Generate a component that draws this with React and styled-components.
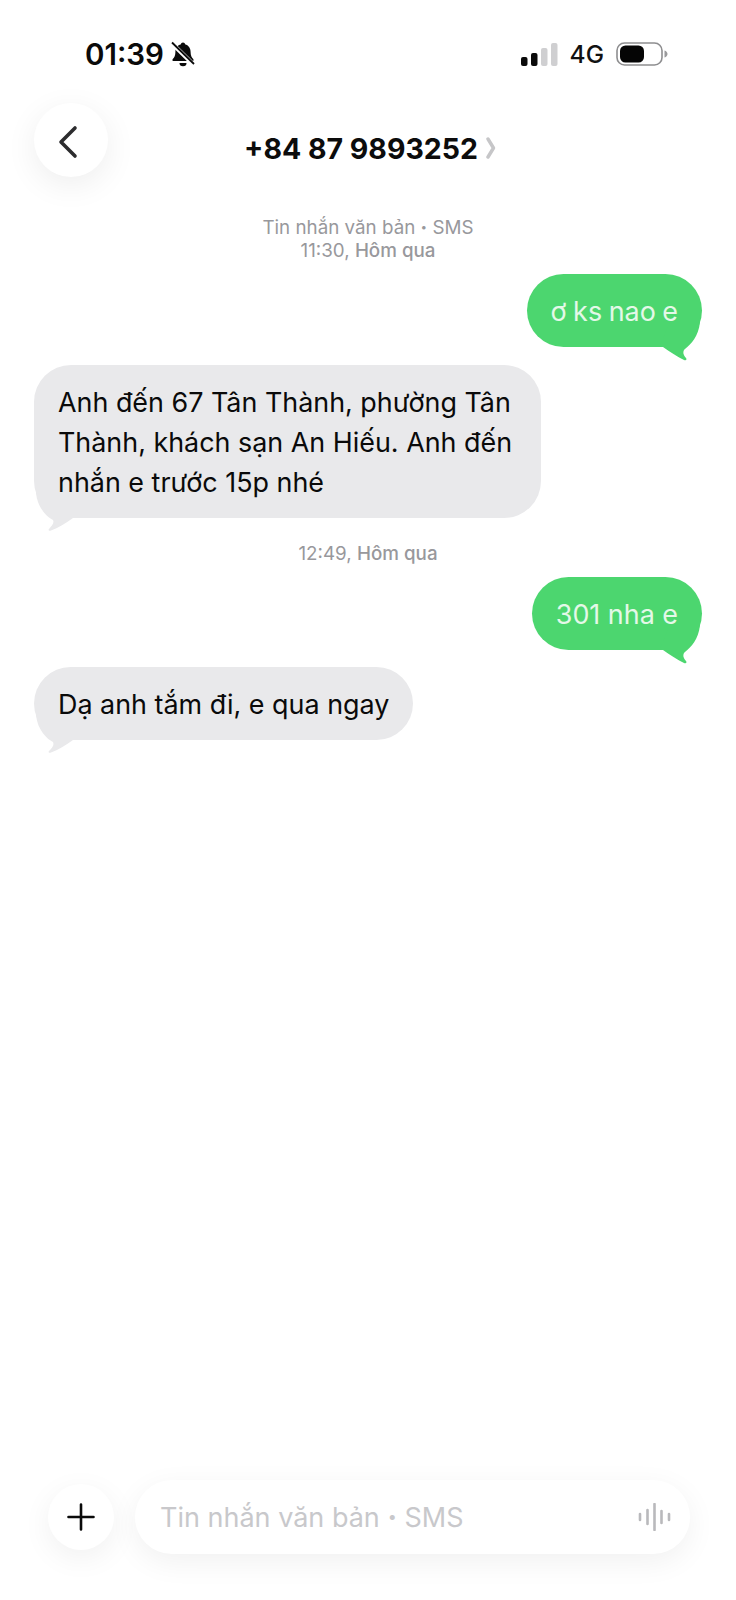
import React from "react";
import styled, { createGlobalStyle } from "styled-components";

const Global = createGlobalStyle`
  html, body { margin: 0; padding: 0; background: #fff; }
  body { font-family: Inter, "Liberation Sans", sans-serif; }
`;

const Page = styled.div`
  width: 736px;
  height: 1600px;
  display: flex;
  flex-direction: column;
  overflow: hidden;
  background: #fff;
`;

const StatusBar = styled.div`
  height: 103px;
  box-sizing: border-box;
  padding: 38px 68px 0 85px;
  display: flex;
  justify-content: space-between;
  align-items: flex-start;
`;
const StatusGroup = styled.div`
  display: flex;
  align-items: center;
  height: 32px;
  gap: ${(p) => p.$gap}px;
`;
const Clock = styled.span`
  font-size: 29.5px;
  font-weight: 600;
  color: #0a0a0a;
`;
const Network = styled.span`
  font-size: 24.5px;
  font-weight: 500;
  color: #111;
`;

const Header = styled.div`
  height: 74px;
  padding: 0 34px;
  display: grid;
  grid-template-columns: 1fr auto 1fr;
  align-items: center;
`;
const BackButton = styled.div`
  width: 74px;
  height: 74px;
  border-radius: 50%;
  background: #fff;
  box-shadow: 0 8px 32px rgba(0, 0, 0, 0.07);
  display: flex;
  align-items: center;
  justify-content: center;
  padding: 3px 6px 0 0;
  box-sizing: border-box;
`;
const TitleRow = styled.div`
  display: flex;
  align-items: center;
  gap: 8px;
  padding: 16px 0 0 4px;
`;
const Title = styled.span`
  font-size: 28.5px;
  font-weight: 700;
  color: #0c0c0c;
`;

const Thread = styled.div`
  flex: 1;
  padding: 0 34px;
  display: flex;
  flex-direction: column;
`;
const Meta = styled.div`
  text-align: center;
  font-size: 18.8px;
  line-height: 23px;
  color: #98989c;
  margin-top: ${(p) => p.$top}px;
  margin-bottom: ${(p) => p.$bottom}px;
`;
const MetaStrong = styled.span`
  font-weight: 500;
`;
const Dot = styled.span`
  font-weight: 800;
`;
const Bubble = styled.div`
  position: relative;
  align-self: ${(p) => (p.$out ? "flex-end" : "flex-start")};
  box-sizing: border-box;
  width: ${(p) => (p.$wide ? "507px" : "auto")};
  padding: 17px 24px 16px;
  border-radius: 37px;
  background: ${(p) => (p.$out ? "#4cd66f" : "#e9e9eb")};
  color: ${(p) => (p.$out ? "#e4f8e8" : "#0a0a0a")};
  font-size: 26.9px;
  line-height: 40px;
  word-spacing: ${(p) => (p.$tight ? "-1px" : "0")};
  margin-bottom: ${(p) => p.$bottom}px;
`;
const TailSvg = styled.svg`
  position: absolute;
  overflow: visible;
  top: calc(100% - 10px);
  ${(p) => (p.$out ? "right: 2px;" : "left: 8px;")}
`;

const Composer = styled.div`
  padding: 0 46px 46px 48px;
  display: flex;
  align-items: center;
  gap: 21px;
`;
const AddButton = styled.div`
  flex: none;
  width: 66px;
  height: 66px;
  border-radius: 50%;
  background: #fff;
  box-shadow: 0 8px 30px rgba(0, 0, 0, 0.06);
  display: flex;
  align-items: center;
  justify-content: center;
`;
const InputPill = styled.div`
  flex: 1;
  height: 74px;
  box-sizing: border-box;
  border-radius: 37px;
  background: #fff;
  box-shadow: 0 8px 30px rgba(0, 0, 0, 0.06);
  padding: 0 19px 0 25px;
  display: flex;
  align-items: center;
  justify-content: space-between;
`;
const Placeholder = styled.span`
  font-size: 27px;
  color: #c8c8cb;
`;

const Tail = ({ out }) =>
  out ? (
    <TailSvg $out width="40" height="26" viewBox="0 0 40 26">
      <path d="M0 8 L3 10 C10 15 18 20 24 23 C26.5 24 27 22 26 21 C23 18 22.5 14 25 12 C31 7 38.5 0 40 -15 L10 -15 Z" fill="#4cd66f" />
    </TailSvg>
  ) : (
    <TailSvg width="40" height="26" viewBox="0 0 40 26">
      <path d="M31 10 C24 15 16 20 9 22.5 C7 23.5 6 22 7 21 C10 18 12.5 15 11 12 C5 9 -4.5 0 -6 -15 L26 -15 Z" fill="#e9e9eb" />
    </TailSvg>
  );

const Bell = () => (
  <svg width="24" height="26" viewBox="0 0 24 26">
    <path d="M12 1.5c1.2 0 2 .8 2 1.8 3.6 1 5.6 4 5.6 7.6 0 3.4 1 5.4 2.6 7 .8.9.3 2.1-.9 2.1H2.7c-1.2 0-1.7-1.2-.9-2.1 1.6-1.6 2.6-3.6 2.6-7 0-3.6 2-6.6 5.6-7.6 0-1 .8-1.8 2-1.8z" fill="#0a0a0a" />
    <path d="M8.5 22h7a3.5 3.2 0 0 1-7 0z" fill="#0a0a0a" />
    <path d="M1 2.5 L23 24" stroke="#fff" strokeWidth="4.4" />
    <path d="M1 1.5 L23 23" stroke="#0a0a0a" strokeWidth="1.8" />
  </svg>
);

const Signal = () => (
  <svg width="37" height="23" viewBox="0 0 37 23">
    <rect x="0" y="14" width="6.5" height="9" rx="2" fill="#0a0a0a" />
    <rect x="10" y="10" width="6.5" height="13" rx="2" fill="#0a0a0a" />
    <rect x="20" y="5" width="6.5" height="18" rx="2" fill="#cfcfd1" />
    <rect x="30" y="0" width="6.5" height="23" rx="2" fill="#cfcfd1" />
  </svg>
);

const Battery = () => (
  <svg width="52" height="24" viewBox="0 0 52 24">
    <rect x="1" y="1" width="45" height="22" rx="7.5" fill="none" stroke="#8e8e90" strokeWidth="1.6" />
    <rect x="4" y="3.5" width="24" height="17" rx="5.5" fill="#050505" />
    <path d="M48.5 8.5c2 .6 3 2 3 3.5s-1 2.9-3 3.5z" fill="#9a9a9c" />
  </svg>
);

const Chevron = () => (
  <svg width="22" height="34" viewBox="0 0 22 34">
    <path d="M18 3 L4 17 L18 31" fill="none" stroke="#2c2c2e" strokeWidth="3.6" strokeLinecap="round" strokeLinejoin="round" />
  </svg>
);

const Disclosure = () => (
  <svg width="10" height="22" viewBox="0 0 10 22">
    <path d="M2 2 L7.5 11 L2 20" fill="none" stroke="#c6c6c8" strokeWidth="3.4" strokeLinecap="round" strokeLinejoin="round" />
  </svg>
);

const Plus = () => (
  <svg width="28" height="28" viewBox="0 0 28 28">
    <path d="M14 1.5 V26.5 M1.5 14 H26.5" stroke="#0a0a0a" strokeWidth="2.6" strokeLinecap="round" />
  </svg>
);

const Wave = () => (
  <svg width="33" height="28" viewBox="0 0 33 28">
    <path d="M2 11 V17 M9.5 7 V21 M16.5 1 V27 M23.5 8 V20 M31 11 V17" stroke="#b9b9bc" strokeWidth="2.6" strokeLinecap="round" />
  </svg>
);

export default function App() {
  return (
    <Page>
      <Global />
      <StatusBar>
        <StatusGroup $gap={7}>
          <Clock>01:39</Clock>
          <Bell />
        </StatusGroup>
        <StatusGroup $gap={12}>
          <Signal />
          <Network>4G</Network>
          <Battery />
        </StatusGroup>
      </StatusBar>
      <Header>
        <BackButton>
          <Chevron />
        </BackButton>
        <TitleRow>
          <Title>+84 87 9893252</Title>
          <Disclosure />
        </TitleRow>
        <div />
      </Header>
      <Thread>
        <Meta $top={39} $bottom={12}>
          Tin nhắn văn bản <Dot>·</Dot> SMS
          <br />
          11:30, <MetaStrong>Hôm qua</MetaStrong>
        </Meta>
        <Bubble $out $tight $bottom={18}>
          ơ ks nao e
          <Tail out />
        </Bubble>
        <Bubble $wide $bottom={24}>
          Anh đến 67 Tân Thành, phường Tân Thành, khách sạn An Hiếu. Anh đến nhắn e trước 15p nhé
          <Tail />
        </Bubble>
        <Meta $top={0} $bottom={12}>
          12:49, <MetaStrong>Hôm qua</MetaStrong>
        </Meta>
        <Bubble $out $bottom={17}>
          301 nha e
          <Tail out />
        </Bubble>
        <Bubble $bottom={0}>
          Dạ anh tắm đi, e qua ngay
          <Tail />
        </Bubble>
      </Thread>
      <Composer>
        <AddButton>
          <Plus />
        </AddButton>
        <InputPill>
          <Placeholder>Tin nhắn văn bản <Dot>·</Dot> SMS</Placeholder>
          <Wave />
        </InputPill>
      </Composer>
    </Page>
  );
}
